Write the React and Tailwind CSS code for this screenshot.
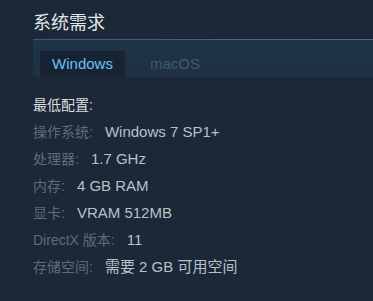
export default function App() {
  const rows = [
    ["操作系统:", "Windows 7 SP1+"],
    ["处理器:", "1.7 GHz"],
    ["内存:", "4 GB RAM"],
    ["显卡:", "VRAM 512MB"],
    ["DirectX 版本:", "11"],
    ["存储空间:", "需要 2 GB 可用空间"],
  ];
  return (
    <div
      className="w-[373px] h-[301px] bg-[#1b2838] overflow-hidden"
      style={{ fontFamily: '"Liberation Sans", Arial, "Noto Sans CJK SC", sans-serif' }}
    >
      <div className="pl-[33px] pt-[11px]">
        <div className="text-[18px] leading-[24px] text-[#e5e7e9] h-[28px]">系统需求</div>
        <div className="h-px bg-gradient-to-r from-[#3c5a72] to-[#4e6e86]" />
        <div className="h-[37px] bg-gradient-to-b from-[#1f3447] to-[#1e3142] flex items-end pl-[7px] gap-[25px]">
          <div className="h-[26px] w-[85px] bg-[#172332] flex items-center justify-center text-[15px] text-[#67c1f5]">
            Windows
          </div>
          <div className="h-[26px] flex items-center text-[15px] text-[#3f5a70]">macOS</div>
        </div>
        <div className="pt-[15px]">
          <div className="h-[27px] leading-[27px] text-[#dcdedf] text-[14px]">最低配置:</div>
          {rows.map(([k, v]) => (
            <div key={k} className="h-[27.1px] leading-[26px] flex gap-[12px]">
              <span className="text-[#5e6c79] text-[14px]">{k}</span>
              <span className="text-[#b8c0c8] text-[15px]">{v}</span>
            </div>
          ))}
        </div>
      </div>
    </div>
  );
}
